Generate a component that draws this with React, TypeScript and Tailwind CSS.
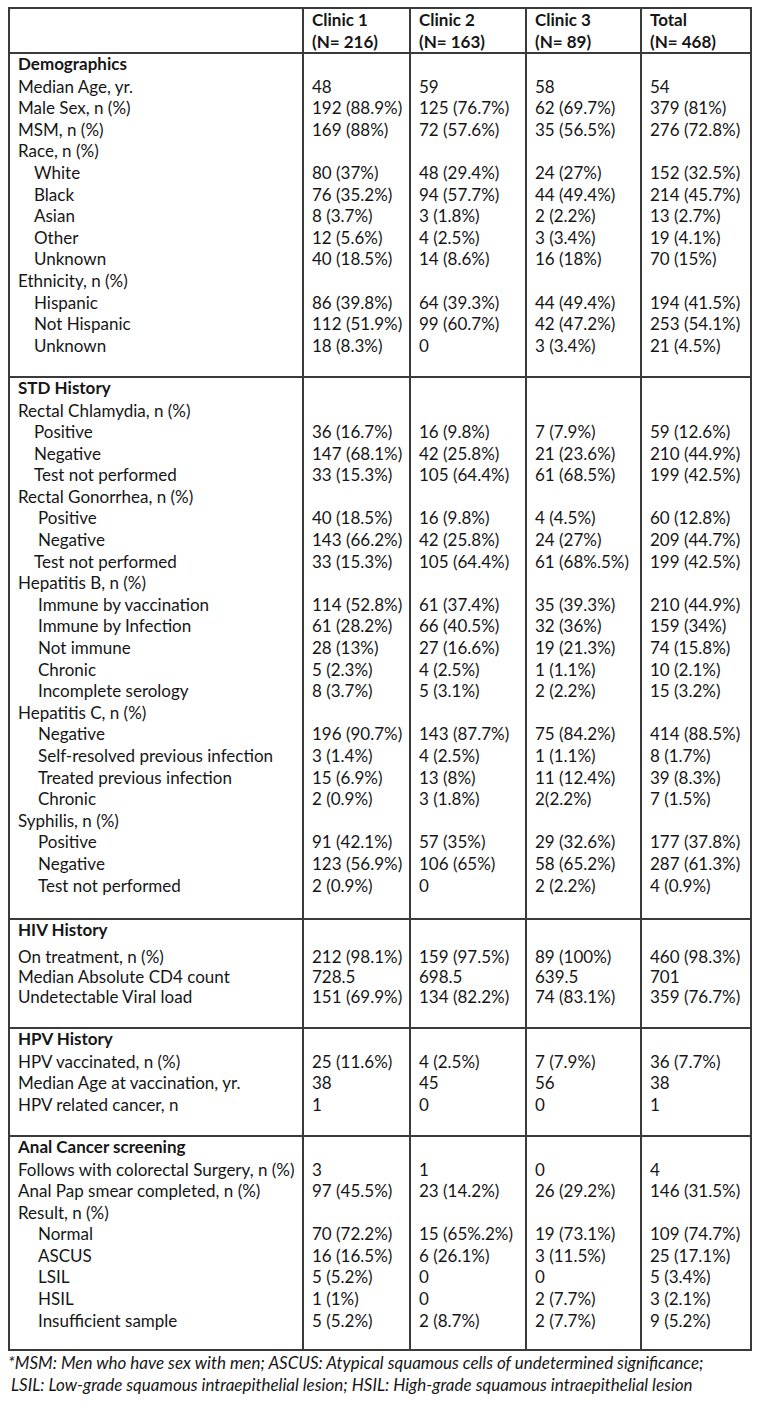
import clsx from 'clsx';

type Line = { label: string; indent?: 0 | 1 | 2; values?: string[]; bold?: boolean };
type Section = { lines: Line[]; tight?: boolean; pad: string };

const INDENT = ['pl-0', 'pl-[16px]', 'pl-[20px]'];

const SECTIONS: Section[] = [
  {
    pad: 'pb-[19.6px]',
    lines: [
      { label: 'Demographics', bold: true },
      { label: 'Median Age, yr.', values: ['48', '59', '58', '54'] },
      { label: 'Male Sex, n (%)', values: ['192 (88.9%)', '125 (76.7%)', '62 (69.7%)', '379 (81%)'] },
      { label: 'MSM, n (%)', values: ['169 (88%)', '72 (57.6%)', '35 (56.5%)', '276 (72.8%)'] },
      { label: 'Race, n (%)' },
      { label: 'White', indent: 1, values: ['80 (37%)', '48 (29.4%)', '24 (27%)', '152 (32.5%)'] },
      { label: 'Black', indent: 1, values: ['76 (35.2%)', '94 (57.7%)', '44 (49.4%)', '214 (45.7%)'] },
      { label: 'Asian', indent: 1, values: ['8 (3.7%)', '3 (1.8%)', '2 (2.2%)', '13 (2.7%)'] },
      { label: 'Other', indent: 1, values: ['12 (5.6%)', '4 (2.5%)', '3 (3.4%)', '19 (4.1%)'] },
      { label: 'Unknown', indent: 1, values: ['40 (18.5%)', '14 (8.6%)', '16 (18%)', '70 (15%)'] },
      { label: 'Ethnicity, n (%)' },
      { label: 'Hispanic', indent: 1, values: ['86 (39.8%)', '64 (39.3%)', '44 (49.4%)', '194 (41.5%)'] },
      { label: 'Not Hispanic', indent: 1, values: ['112 (51.9%)', '99 (60.7%)', '42 (47.2%)', '253 (54.1%)'] },
      { label: 'Unknown', indent: 1, values: ['18 (8.3%)', '0', '3 (3.4%)', '21 (4.5%)'] },
    ],
  },
  {
    pad: 'pb-[21.6px]',
    lines: [
      { label: 'STD History', bold: true },
      { label: 'Rectal Chlamydia, n (%)' },
      { label: 'Positive', indent: 1, values: ['36 (16.7%)', '16 (9.8%)', '7 (7.9%)', '59 (12.6%)'] },
      { label: 'Negative', indent: 1, values: ['147 (68.1%)', '42 (25.8%)', '21 (23.6%)', '210 (44.9%)'] },
      { label: 'Test not performed', indent: 1, values: ['33 (15.3%)', '105 (64.4%)', '61 (68.5%)', '199 (42.5%)'] },
      { label: 'Rectal Gonorrhea, n (%)' },
      { label: 'Positive', indent: 2, values: ['40 (18.5%)', '16 (9.8%)', '4 (4.5%)', '60 (12.8%)'] },
      { label: 'Negative', indent: 2, values: ['143 (66.2%)', '42 (25.8%)', '24 (27%)', '209 (44.7%)'] },
      { label: 'Test not performed', indent: 1, values: ['33 (15.3%)', '105 (64.4%)', '61 (68%.5%)', '199 (42.5%)'] },
      { label: 'Hepatitis B, n (%)' },
      { label: 'Immune by vaccination', indent: 2, values: ['114 (52.8%)', '61 (37.4%)', '35 (39.3%)', '210 (44.9%)'] },
      { label: 'Immune by Infection', indent: 2, values: ['61 (28.2%)', '66 (40.5%)', '32 (36%)', '159 (34%)'] },
      { label: 'Not immune', indent: 2, values: ['28 (13%)', '27 (16.6%)', '19 (21.3%)', '74 (15.8%)'] },
      { label: 'Chronic', indent: 2, values: ['5 (2.3%)', '4 (2.5%)', '1 (1.1%)', '10 (2.1%)'] },
      { label: 'Incomplete serology', indent: 2, values: ['8 (3.7%)', '5 (3.1%)', '2 (2.2%)', '15 (3.2%)'] },
      { label: 'Hepatitis C, n (%)' },
      { label: 'Negative', indent: 2, values: ['196 (90.7%)', '143 (87.7%)', '75 (84.2%)', '414 (88.5%)'] },
      { label: 'Self-resolved previous infection', indent: 2, values: ['3 (1.4%)', '4 (2.5%)', '1 (1.1%)', '8 (1.7%)'] },
      { label: 'Treated previous infection', indent: 2, values: ['15 (6.9%)', '13 (8%)', '11 (12.4%)', '39 (8.3%)'] },
      { label: 'Chronic', indent: 2, values: ['2 (0.9%)', '3 (1.8%)', '2(2.2%)', '7 (1.5%)'] },
      { label: 'Syphilis, n (%)' },
      { label: 'Positive', indent: 2, values: ['91 (42.1%)', '57 (35%)', '29 (32.6%)', '177 (37.8%)'] },
      { label: 'Negative', indent: 2, values: ['123 (56.9%)', '106 (65%)', '58 (65.2%)', '287 (61.3%)'] },
      { label: 'Test not performed', indent: 2, values: ['2 (0.9%)', '0', '2 (2.2%)', '4 (0.9%)'] },
    ],
  },
  {
    tight: true,
    pad: 'pb-[19.6px]',
    lines: [
      { label: 'HIV History', bold: true },
      { label: 'On treatment, n (%)', values: ['212 (98.1%)', '159 (97.5%)', '89 (100%)', '460 (98.3%)'] },
      { label: 'Median Absolute CD4 count', values: ['728.5', '698.5', '639.5', '701'] },
      { label: 'Undetectable Viral load', values: ['151 (69.9%)', '134 (82.2%)', '74 (83.1%)', '359 (76.7%)'] },
    ],
  },
  {
    pad: 'pb-[19.6px]',
    lines: [
      { label: 'HPV History', bold: true },
      { label: 'HPV vaccinated, n (%)', values: ['25 (11.6%)', '4 (2.5%)', '7 (7.9%)', '36 (7.7%)'] },
      { label: 'Median Age at vaccination, yr.', values: ['38', '45', '56', '38'] },
      { label: 'HPV related cancer, n', values: ['1', '0', '0', '1'] },
    ],
  },
  {
    pad: 'pb-[17.6px]',
    lines: [
      { label: 'Anal Cancer screening', bold: true },
      { label: 'Follows with colorectal Surgery, n (%)', values: ['3', '1', '0', '4'] },
      { label: 'Anal Pap smear completed, n (%)', values: ['97 (45.5%)', '23 (14.2%)', '26 (29.2%)', '146 (31.5%)'] },
      { label: 'Result, n (%)' },
      { label: 'Normal', indent: 2, values: ['70 (72.2%)', '15 (65%.2%)', '19 (73.1%)', '109 (74.7%)'] },
      { label: 'ASCUS', indent: 2, values: ['16 (16.5%)', '6 (26.1%)', '3 (11.5%)', '25 (17.1%)'] },
      { label: 'LSIL', indent: 2, values: ['5 (5.2%)', '0', '0', '5 (3.4%)'] },
      { label: 'HSIL', indent: 2, values: ['1 (1%)', '0', '2 (7.7%)', '3 (2.1%)'] },
      { label: 'Insufficient sample', indent: 2, values: ['5 (5.2%)', '2 (8.7%)', '2 (7.7%)', '9 (5.2%)'] },
    ],
  },
];

const HEADERS = [
  ['Clinic 1', '(N= 216)'],
  ['Clinic 2', '(N= 163)'],
  ['Clinic 3', '(N= 89)'],
  ['Total', '(N= 468)'],
];

const cell = 'border-2 border-[#3a3a3a] px-2 align-top';

function SectionRow({ section }: { section: Section }) {
  const [head, ...rest] = section.lines;
  return (
    <tr>
      <td className={clsx(cell, section.pad)}>
        <div className="-mt-[1px] font-bold">{head.label}</div>
        <div className={clsx(section.tight ? 'mt-[7px] leading-[20px]' : 'mt-[1px]')}>
          {rest.map((l, i) => (
            <div key={i} className={clsx('whitespace-nowrap', INDENT[l.indent ?? 0])}>
              {l.label}
            </div>
          ))}
        </div>
      </td>
      {[0, 1, 2, 3].map((c) => (
        <td key={c} className={clsx(cell, section.pad)}>
          <div className="-mt-[1px]">&nbsp;</div>
          <div className={clsx(section.tight ? 'mt-[7px] leading-[20px]' : 'mt-[1px]')}>
            {rest.map((l, i) => (
              <div key={i} className="whitespace-nowrap">
                {l.values ? l.values[c] : '\u00a0'}
              </div>
            ))}
          </div>
        </td>
      ))}
    </tr>
  );
}

export default function App() {
  return (
    <div className="min-h-screen bg-white pt-[7px] font-['Lato',sans-serif] text-[17px] leading-[21.6px] text-[#161616]">
      <table className="ml-[8px] w-[742px] table-fixed border-collapse">
        <colgroup>
          <col className="w-[294px]" />
          <col className="w-[107px]" />
          <col className="w-[116px]" />
          <col className="w-[115px]" />
          <col className="w-[110px]" />
        </colgroup>
        <thead>
          <tr>
            <th className={cell} />
            {HEADERS.map(([a, b]) => (
              <th key={a} className={clsx(cell, 'text-left font-bold leading-[21.5px]')}>
                <div>{a}</div>
                <div>{b}</div>
              </th>
            ))}
          </tr>
        </thead>
        <tbody>
          {SECTIONS.map((s, i) => (
            <SectionRow key={i} section={s} />
          ))}
        </tbody>
      </table>
      <div className="pl-[8px] pt-[1px] italic leading-[22px]">
        <div className="whitespace-nowrap">
          *MSM: Men who have sex with men; ASCUS: Atypical squamous cells of undetermined significance;
        </div>
        <div className="whitespace-nowrap pl-[3px]">
          LSIL: Low-grade squamous intraepithelial lesion; HSIL: High-grade squamous intraepithelial lesion
        </div>
      </div>
    </div>
  );
}
